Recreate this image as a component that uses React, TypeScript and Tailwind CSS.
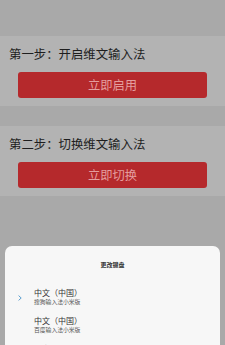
const font = { fontFamily: '"Noto Sans CJK SC", "Noto Sans", sans-serif' };

const Step = ({ title, action }: { title: string; action: string }) => (
    <div className="h-[70px] shrink-0 bg-[#b3b3b3] flex flex-col px-[9px] pt-[10px]">
        <div className="text-[12.4px] leading-[17px] text-[#1e1e1e]">{title}</div>
        <button
            type="button"
            className="mt-[9px] ml-[9px] w-[189px] h-[26px] rounded-[3px] bg-[#b5292c] text-[12.3px] text-[#e49e9e] flex items-center justify-center"
        >
            {action}
        </button>
    </div>
);

const Keyboard = ({ name, sub, active }: { name: string; sub: string; active?: boolean }) => (
    <div className="flex items-center h-[28px] shrink-0">
        <div className="w-[29px] flex justify-end pr-[12px] pt-[3px]">
            {active && (
                <svg width="4" height="6" viewBox="0 0 4 6">
                    <path d="M0.6 0.6 L3.2 3 L0.6 5.4" stroke="#5b9fcf" strokeWidth="1" fill="none" />
                </svg>
            )}
        </div>
        <div className="flex flex-col">
            <div className="text-[8px] leading-[11px] text-[#333]">{name}</div>
            <div className="text-[5.8px] leading-[8px] text-[#555]">{sub}</div>
        </div>
    </div>
);

const App = () => {
    return (
        <div className="h-[345px] w-[225px] bg-[#a9a9a9] flex flex-col overflow-hidden" style={font}>
            <div className="h-[36px] shrink-0" />
            <Step title="第一步：开启维文输入法" action="立即启用" />
            <div className="h-[20px] shrink-0" />
            <Step title="第二步：切换维文输入法" action="立即切换" />
            <div className="h-[50px] shrink-0" />
            <div className="mx-[5px] h-[99px] shrink-0 overflow-hidden rounded-t-[7px] bg-[#f7f7f7] flex flex-col">
                <div className="h-[36px] shrink-0 flex items-center justify-center text-[6px] font-bold text-[#333]">更改键盘</div>
                <Keyboard name="中文（中国）" sub="搜狗输入法小米版" active />
                <Keyboard name="中文（中国）" sub="百度输入法小米版" />
                <Keyboard name="维文" sub="维文输入法" />
            </div>
        </div>
    );
};

export default App;
